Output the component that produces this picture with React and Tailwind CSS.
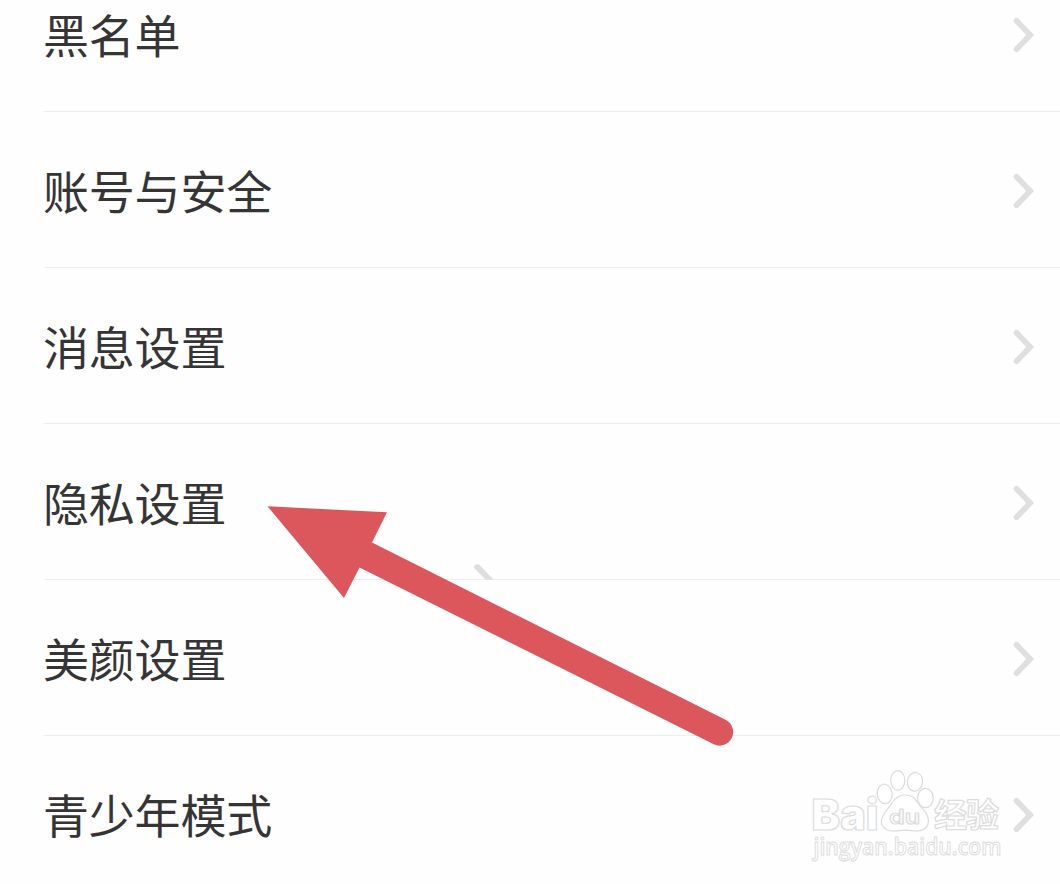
const items = ["黑名单", "账号与安全", "消息设置", "隐私设置", "美颜设置", "青少年模式"];

const Chevron = () => (
  <svg width="24" height="40" viewBox="0 0 24 40" className="shrink-0 mt-0.5" fill="none">
    <path d="M4.5 5.8 L18.2 20 L4.5 34.2" stroke="#dfdfdf" strokeWidth="5.6" strokeLinecap="round" />
  </svg>
);

// Red pointer, plus the stray chevron tip under it
const Arrow = () => (
  <svg
    className="absolute left-0 top-0 pointer-events-none"
    width="1060"
    height="884"
    viewBox="0 0 1060 884"
    fill="none"
  >
    <path d="M474 568 Q474 563 479 564.5 L493.5 579.5 L485.5 579.5 Z" fill="#dedede" />
    <path
      d="M267.5 506.3 L387 512.3 L372 542.5 L726 720 A13.6 13.6 0 0 1 713.8 744.3 L359.5 567.5 L344 598 Z"
      fill="#dc575c"
    />
  </svg>
);

const Watermark = () => (
  <svg
    className="absolute left-[805px] top-[765px] overflow-visible pointer-events-none"
    width="205"
    height="105"
    viewBox="0 0 205 105"
    fill="#ffffff"
    stroke="#dcdcdc"
    strokeWidth="1.2"
    strokeLinejoin="round"
  >
    <text x="6.5" y="64.5" textLength="67" lengthAdjust="spacingAndGlyphs" className="font-['Inter',sans-serif] font-black text-[43px]">
      Bai
    </text>
    <ellipse cx="79.7" cy="29" rx="7.4" ry="9.8" transform="rotate(-6 79.7 29)" />
    <ellipse cx="92.8" cy="15.4" rx="7" ry="9.8" />
    <ellipse cx="110" cy="16.8" rx="7.6" ry="9.4" transform="rotate(8 110 16.8)" />
    <ellipse cx="120.4" cy="33" rx="7.8" ry="9.6" />
    <path d="M100 30 C108 30 110 34 113 38 C116 43 120 45 122 50 C126 59 121 66 112 66 C107 66 105 65.2 100 65.2 C95 65.2 93 66 88 66 C79 66 73.500 59 78 51 C80 46 84 43 87 38 C90 33 94 30 100 30 Z" />
    <text x="84" y="59.3" textLength="31" lengthAdjust="spacingAndGlyphs" className="font-['Inter',sans-serif] font-semibold text-[20px]">
      du
    </text>
    <text x="129" y="61.500" textLength="65" className="font-['Noto_Sans_CJK_SC',sans-serif] font-bold text-[33px]">
      经验
    </text>
    <text
      x="8.5"
      y="90"
      textLength="188"
      lengthAdjust="spacingAndGlyphs"
      strokeWidth="1"
      className="font-['Open_Sans',sans-serif] font-semibold text-[23.5px]"
    >
      jingyan.baidu.com
    </text>
  </svg>
);

const App = () => {
  return (
    <div className="relative w-[1060px] h-[884px] overflow-hidden bg-[#fefefe] font-['Noto_Sans_CJK_SC',sans-serif]">
      {/* Settings list, scrolled so the first row is partly cut off */}
      <ul className="-mt-11 pl-11">
        {items.map((label) => (
          <li
            key={label}
            className="flex h-[156px] items-center justify-between border-b border-[#ededed] pr-6"
          >
            <span className="-ml-px mb-px text-[46px] leading-[68px] tracking-[-0.2px] text-[#353535] whitespace-nowrap">
              {label}
            </span>
            <Chevron />
          </li>
        ))}
      </ul>

      <Watermark />
      <Arrow />
    </div>
  );
};

export default App;
